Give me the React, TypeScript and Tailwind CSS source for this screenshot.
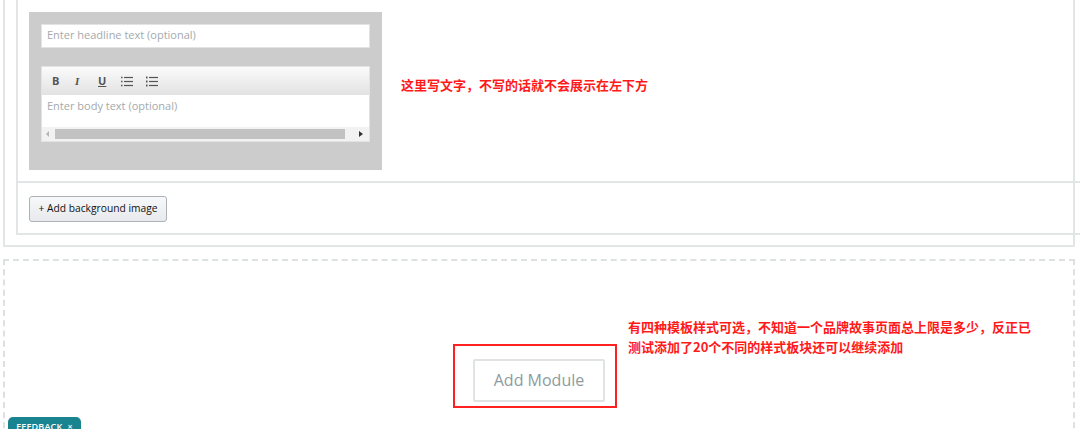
import React from 'react';

function ListIcon({ ordered }: { ordered?: boolean }) {
  return (
    <svg width="12" height="11" viewBox="0 0 12 11" className="text-[#555]">
      {[1.5, 5.5, 9.5].map((y) => (
        <g key={y}>
          {ordered ? (
            <rect x="0" y={y - 1} width="1.5" height="2" fill="currentColor" />
          ) : (
            <rect x="0" y={y - 0.75} width="1.5" height="1.5" fill="currentColor" />
          )}
          <rect x="3" y={y - 0.6} width="9" height="1.2" fill="currentColor" />
        </g>
      ))}
    </svg>
  );
}

function Editor() {
  return (
    <div className="h-[76px] border border-[#e3e3e3] bg-white">
      <div className="flex h-[28px] items-center gap-[13px] bg-gradient-to-b from-[#fbfbfb] to-[#e2e2e2] pl-[10px] text-[11px] text-[#555]">
        <span className="w-[10px] font-bold">B</span>
        <span className="w-[10px] font-bold italic" style={{ fontFamily: '"Liberation Serif", serif' }}>
          I
        </span>
        <span className="w-[10px] font-bold underline">U</span>
        <ListIcon />
        <ListIcon ordered />
      </div>
      <div className="h-[32px] px-[5px] pt-[3px] text-[11px] text-[#a3aaad]">Enter body text (optional)</div>
      <div className="flex h-[14px] items-center bg-[#f2f2f2] px-[4px]">
        <span className="mr-[6px] h-0 w-0 border-y-[3px] border-r-[3px] border-y-transparent border-r-[#b5b5b5]" />
        <div className="h-[10px] flex-1 bg-[#c2c2c2]" />
        <span className="ml-[14px] mr-[2px] h-0 w-0 border-y-[3px] border-l-[4px] border-y-transparent border-l-[#333]" />
      </div>
    </div>
  );
}

export default function App() {
  return (
    <div
      className="relative h-[429px] w-[1080px] overflow-hidden bg-white"
      style={{ fontFamily: '"Open Sans", "Liberation Sans", sans-serif' }}
    >
      {/* saved module */}
      <div className="ml-[3px] w-[1072px] border-x-2 border-b-2 border-[#e3e6e6] pb-[10px] pl-[11px]">
        <div className="w-[1080px] border-b-2 border-l-2 border-[#e3e6e6]">
          <div className="flex items-start border-b-2 border-[#e3e6e6] pb-[11px] pl-[11px] pt-[12px]">
            <div className="h-[158px] w-[353px] bg-[#cccccc] p-[12px]">
              <div className="mb-[18px] flex h-[24px] items-center border border-[#e3e3e3] bg-white px-[5px] pb-[1px] text-[11px] text-[#a3aaad]">
                Enter headline text (optional)
              </div>
              <Editor />
            </div>
            <p
              className="ml-[19px] mt-[64px] text-[13px] font-bold leading-[17px] text-[#ff1a1a]"
              style={{ fontFamily: '"Noto Sans CJK SC", sans-serif' }}
            >
              这里写文字，不写的话就不会展示在左下方
            </p>
          </div>
          <div className="pb-[11px] pl-[11px] pt-[11px]">
            <button className="h-[26px] w-[138px] rounded-[3px] border border-[#adb1b8] bg-gradient-to-b from-[#f7f8fa] to-[#e7e9ec] text-[10.25px] text-[#111]">
              + Add background image
            </button>
          </div>
        </div>
      </div>

      {/* add module area */}
      <div className="relative ml-[3px] mt-[12px] h-[200px] w-[1072px] border-2 border-dashed border-[#dde1e1]">
        <p
          className="absolute left-[623px] top-[56px] text-[13px] font-bold leading-[20px] text-[#ff1a1a]"
          style={{ fontFamily: '"Noto Sans CJK SC", sans-serif' }}
        >
          有四种模板样式可选，不知道一个品牌故事页面总上限是多少，反正已
          <br />
          测试添加了20个不同的样式板块还可以继续添加
        </p>
        <div className="ml-[448px] mt-[83px] h-[64px] w-[164px] border-2 border-[#ff2020] px-[18px] pt-[13px]">
          <div className="flex h-[43px] w-[132px] items-center justify-center rounded-[2px] border-2 border-[#dfe3e3] text-[16px] text-[#8d9ba0]">
            Add Module
          </div>
        </div>
      </div>

      <div className="absolute left-[8px] top-[417px] flex h-[20px] w-[73px] items-start justify-center rounded-t-[5px] bg-[#19838f] pt-[3px] text-[9px] font-semibold tracking-[0.02em] text-white">
        FEEDBACK&nbsp;&nbsp;×
      </div>
    </div>
  );
}
